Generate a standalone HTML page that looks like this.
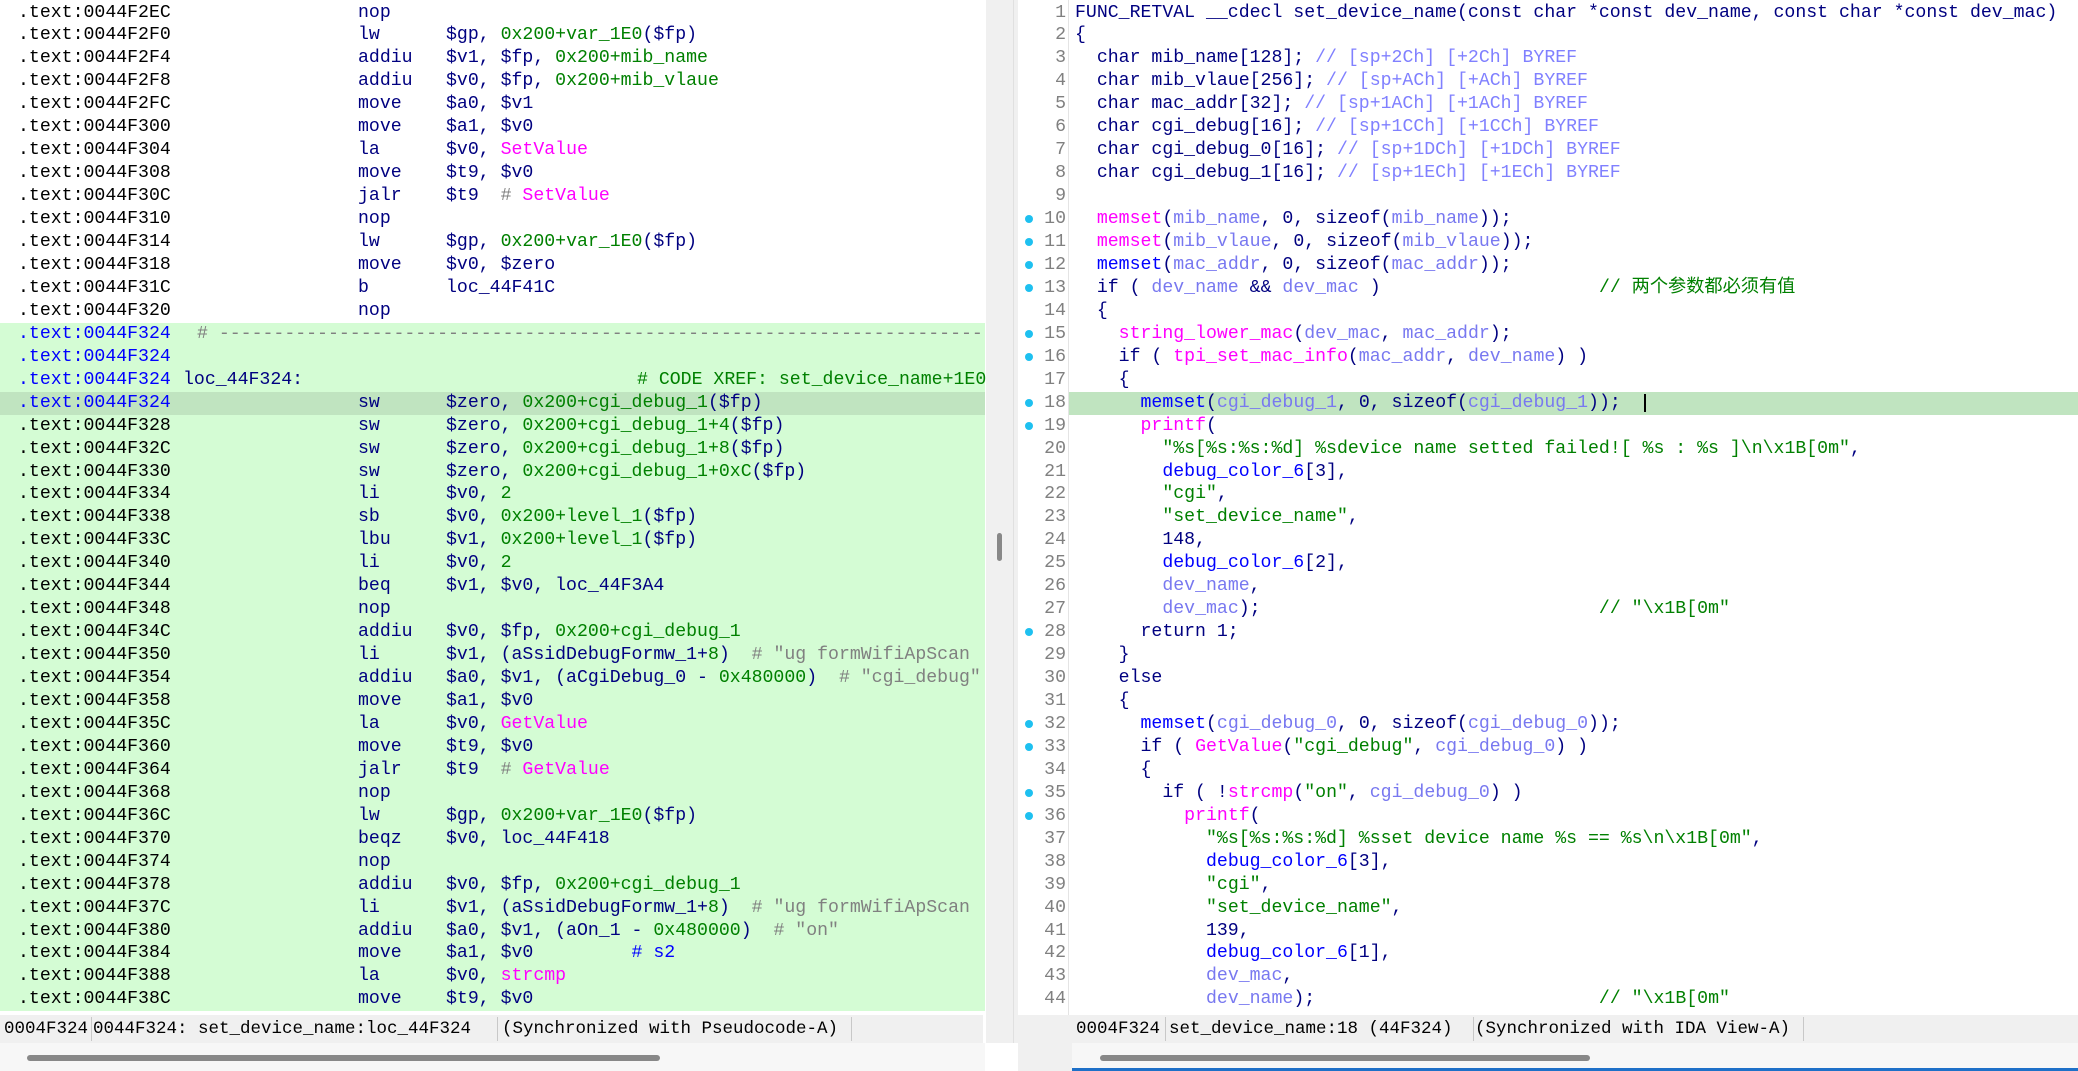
<!DOCTYPE html>
<html><head><meta charset="utf-8"><style>
*{margin:0;padding:0;box-sizing:border-box}
body{width:2078px;height:1071px;overflow:hidden;background:#fff;font-family:"Liberation Mono","Noto Sans CJK SC",monospace;font-size:18.2px;position:relative}
.row{position:absolute;left:0;height:22.95px;line-height:22.95px;white-space:pre}
.L{width:985px}
.L i{position:absolute;font-style:normal;top:0}
.a{left:18px;color:#000}
.m{left:358px;color:#000080}
.o{left:446px;color:#000080}
.bl{color:#0000ff}
.gr{background:#d4fcd4}
.hl{background:#c0e4c0}
.n{color:#000080}.v{color:#7878f0}.f{color:#ff00ff}.g{color:#0000ff}.s{color:#008000}.c{color:#8080ff}.k{color:#808080}
.R{left:1075px;width:1003px;color:#000080}
.ln{position:absolute;left:1012px;width:54px;text-align:right;color:#808080;height:22.95px;line-height:22.95px}
.dot{position:absolute;left:1025px;width:8px;height:8px;border-radius:50%;background:#1ec0f0}
.sb{position:absolute;top:1015px;height:28px;background:#f0f0f0;font-family:"Liberation Mono",monospace;font-size:17.5px;line-height:28px;color:#000;white-space:pre}
.sb span{position:absolute;top:0}
.sep{position:absolute;top:2px;width:1px;height:24px;background:#c8c8c8}
</style></head><body>
<div style="position:absolute;left:985px;top:0;width:33px;height:1043px;background:#f0f0f0;border-left:1px solid #fff"></div>
<div style="position:absolute;left:1013px;top:0;width:1px;height:1043px;background:#e0e0e0"></div>
<div style="position:absolute;left:997px;top:533px;width:5px;height:28px;border-radius:3px;background:#888"></div>
<div style="position:absolute;left:1068px;top:0;width:1px;height:1015px;background:#e4e4e4"></div>
<div style="position:absolute;left:0;top:322.8px;width:985px;height:688.5px;background:#d4fcd4"></div>

<!-- LEFT -->
<div class="row L" style="top:1.5px"><i class="a">.text:0044F2EC</i><i class="m">nop</i></div>
<div class="row L" style="top:24.45px"><i class="a">.text:0044F2F0</i><i class="m">lw</i><i class="o">$gp, <span class="s">0x200+var_1E0</span>($fp)</i></div>
<div class="row L" style="top:47.4px"><i class="a">.text:0044F2F4</i><i class="m">addiu</i><i class="o">$v1, $fp, <span class="s">0x200+mib_name</span></i></div>
<div class="row L" style="top:70.35px"><i class="a">.text:0044F2F8</i><i class="m">addiu</i><i class="o">$v0, $fp, <span class="s">0x200+mib_vlaue</span></i></div>
<div class="row L" style="top:93.3px"><i class="a">.text:0044F2FC</i><i class="m">move</i><i class="o">$a0, $v1</i></div>
<div class="row L" style="top:116.25px"><i class="a">.text:0044F300</i><i class="m">move</i><i class="o">$a1, $v0</i></div>
<div class="row L" style="top:139.2px"><i class="a">.text:0044F304</i><i class="m">la</i><i class="o">$v0, <span class="f">SetValue</span></i></div>
<div class="row L" style="top:162.15px"><i class="a">.text:0044F308</i><i class="m">move</i><i class="o">$t9, $v0</i></div>
<div class="row L" style="top:185.1px"><i class="a">.text:0044F30C</i><i class="m">jalr</i><i class="o">$t9  <span class="k">#</span> <span class="f">SetValue</span></i></div>
<div class="row L" style="top:208.05px"><i class="a">.text:0044F310</i><i class="m">nop</i></div>
<div class="row L" style="top:231px"><i class="a">.text:0044F314</i><i class="m">lw</i><i class="o">$gp, <span class="s">0x200+var_1E0</span>($fp)</i></div>
<div class="row L" style="top:253.95px"><i class="a">.text:0044F318</i><i class="m">move</i><i class="o">$v0, $zero</i></div>
<div class="row L" style="top:276.9px"><i class="a">.text:0044F31C</i><i class="m">b</i><i class="o">loc_44F41C</i></div>
<div class="row L" style="top:299.85px"><i class="a">.text:0044F320</i><i class="m">nop</i></div>
<div class="row L" style="top:322.8px;overflow:hidden"><i class="a bl">.text:0044F324</i><i class="k" style="left:197px">#&nbsp;----------------------------------------------------------------------</i></div>
<div class="row L" style="top:345.75px"><i class="a bl">.text:0044F324</i></div>
<div class="row L" style="top:368.7px"><i class="a bl">.text:0044F324</i><i class="n" style="left:183px">loc_44F324:</i><i class="s" style="left:637px">#&nbsp;CODE XREF: set_device_name+1E0</i></div>
<div class="row L hl" style="top:391.65px"><i class="a bl">.text:0044F324</i><i class="m">sw</i><i class="o">$zero, <span class="s">0x200+cgi_debug_1</span>($fp)</i></div>
<div class="row L" style="top:414.6px"><i class="a">.text:0044F328</i><i class="m">sw</i><i class="o">$zero, <span class="s">0x200+cgi_debug_1+4</span>($fp)</i></div>
<div class="row L" style="top:437.55px"><i class="a">.text:0044F32C</i><i class="m">sw</i><i class="o">$zero, <span class="s">0x200+cgi_debug_1+8</span>($fp)</i></div>
<div class="row L" style="top:460.5px"><i class="a">.text:0044F330</i><i class="m">sw</i><i class="o">$zero, <span class="s">0x200+cgi_debug_1+0xC</span>($fp)</i></div>
<div class="row L" style="top:483.45px"><i class="a">.text:0044F334</i><i class="m">li</i><i class="o">$v0, <span class="s">2</span></i></div>
<div class="row L" style="top:506.4px"><i class="a">.text:0044F338</i><i class="m">sb</i><i class="o">$v0, <span class="s">0x200+level_1</span>($fp)</i></div>
<div class="row L" style="top:529.35px"><i class="a">.text:0044F33C</i><i class="m">lbu</i><i class="o">$v1, <span class="s">0x200+level_1</span>($fp)</i></div>
<div class="row L" style="top:552.3px"><i class="a">.text:0044F340</i><i class="m">li</i><i class="o">$v0, <span class="s">2</span></i></div>
<div class="row L" style="top:575.25px"><i class="a">.text:0044F344</i><i class="m">beq</i><i class="o">$v1, $v0, loc_44F3A4</i></div>
<div class="row L" style="top:598.2px"><i class="a">.text:0044F348</i><i class="m">nop</i></div>
<div class="row L" style="top:621.15px"><i class="a">.text:0044F34C</i><i class="m">addiu</i><i class="o">$v0, $fp, <span class="s">0x200+cgi_debug_1</span></i></div>
<div class="row L" style="top:644.1px;overflow:hidden"><i class="a">.text:0044F350</i><i class="m">li</i><i class="o">$v1, (aSsidDebugFormw_1+<span class="s">8</span>)  <span class="k">#&nbsp;"ug formWifiApScan</span></i></div>
<div class="row L" style="top:667.05px;overflow:hidden"><i class="a">.text:0044F354</i><i class="m">addiu</i><i class="o">$a0, $v1, (aCgiDebug_0 - <span class="s">0x480000</span>)  <span class="k">#&nbsp;"cgi_debug"</span></i></div>
<div class="row L" style="top:690px"><i class="a">.text:0044F358</i><i class="m">move</i><i class="o">$a1, $v0</i></div>
<div class="row L" style="top:712.95px"><i class="a">.text:0044F35C</i><i class="m">la</i><i class="o">$v0, <span class="f">GetValue</span></i></div>
<div class="row L" style="top:735.9px"><i class="a">.text:0044F360</i><i class="m">move</i><i class="o">$t9, $v0</i></div>
<div class="row L" style="top:758.85px"><i class="a">.text:0044F364</i><i class="m">jalr</i><i class="o">$t9  <span class="k">#</span> <span class="f">GetValue</span></i></div>
<div class="row L" style="top:781.8px"><i class="a">.text:0044F368</i><i class="m">nop</i></div>
<div class="row L" style="top:804.75px"><i class="a">.text:0044F36C</i><i class="m">lw</i><i class="o">$gp, <span class="s">0x200+var_1E0</span>($fp)</i></div>
<div class="row L" style="top:827.7px"><i class="a">.text:0044F370</i><i class="m">beqz</i><i class="o">$v0, loc_44F418</i></div>
<div class="row L" style="top:850.65px"><i class="a">.text:0044F374</i><i class="m">nop</i></div>
<div class="row L" style="top:873.6px"><i class="a">.text:0044F378</i><i class="m">addiu</i><i class="o">$v0, $fp, <span class="s">0x200+cgi_debug_1</span></i></div>
<div class="row L" style="top:896.55px;overflow:hidden"><i class="a">.text:0044F37C</i><i class="m">li</i><i class="o">$v1, (aSsidDebugFormw_1+<span class="s">8</span>)  <span class="k">#&nbsp;"ug formWifiApScan</span></i></div>
<div class="row L" style="top:919.5px"><i class="a">.text:0044F380</i><i class="m">addiu</i><i class="o">$a0, $v1, (aOn_1 - <span class="s">0x480000</span>)  <span class="k">#&nbsp;"on"</span></i></div>
<div class="row L" style="top:942.45px"><i class="a">.text:0044F384</i><i class="m">move</i><i class="o">$a1, $v0         <span class="g">#&nbsp;s2</span></i></div>
<div class="row L" style="top:965.4px"><i class="a">.text:0044F388</i><i class="m">la</i><i class="o">$v0, <span class="f">strcmp</span></i></div>
<div class="row L" style="top:988.35px"><i class="a">.text:0044F38C</i><i class="m">move</i><i class="o">$t9, $v0</i></div>

<!-- RIGHT -->
<div class="row hl" style="top:391.65px;left:1069px;width:1009px"></div>
<div style="position:absolute;left:1644px;top:394px;width:2px;height:18px;background:#000"></div>
<div class="row R" style="top:1.5px">FUNC_RETVAL __cdecl set_device_name(const char *const dev_name, const char *const dev_mac)</div>
<div class="row R" style="top:24.45px">{</div>
<div class="row R" style="top:47.4px">  char mib_name[128]; <span class="c">// [sp+2Ch] [+2Ch] BYREF</span></div>
<div class="row R" style="top:70.35px">  char mib_vlaue[256]; <span class="c">// [sp+ACh] [+ACh] BYREF</span></div>
<div class="row R" style="top:93.3px">  char mac_addr[32]; <span class="c">// [sp+1ACh] [+1ACh] BYREF</span></div>
<div class="row R" style="top:116.25px">  char cgi_debug[16]; <span class="c">// [sp+1CCh] [+1CCh] BYREF</span></div>
<div class="row R" style="top:139.2px">  char cgi_debug_0[16]; <span class="c">// [sp+1DCh] [+1DCh] BYREF</span></div>
<div class="row R" style="top:162.15px">  char cgi_debug_1[16]; <span class="c">// [sp+1ECh] [+1ECh] BYREF</span></div>
<div class="row R" style="top:208.05px">  <span class="f">memset</span>(<span class="v">mib_name</span>, 0, sizeof(<span class="v">mib_name</span>));</div>
<div class="row R" style="top:231px">  <span class="f">memset</span>(<span class="v">mib_vlaue</span>, 0, sizeof(<span class="v">mib_vlaue</span>));</div>
<div class="row R" style="top:253.95px">  <span class="g">memset</span>(<span class="v">mac_addr</span>, 0, sizeof(<span class="v">mac_addr</span>));</div>
<div class="row R" style="top:276.9px">  if ( <span class="v">dev_name</span> &amp;&amp; <span class="v">dev_mac</span> )                    <span class="s">// 两个参数都必须有值</span></div>
<div class="row R" style="top:299.85px">  {</div>
<div class="row R" style="top:322.8px">    <span class="f">string_lower_mac</span>(<span class="v">dev_mac</span>, <span class="v">mac_addr</span>);</div>
<div class="row R" style="top:345.75px">    if ( <span class="f">tpi_set_mac_info</span>(<span class="v">mac_addr</span>, <span class="v">dev_name</span>) )</div>
<div class="row R" style="top:368.7px">    {</div>
<div class="row R" style="top:391.65px">      <span class="g">memset</span>(<span class="v">cgi_debug_1</span>, 0, sizeof(<span class="v">cgi_debug_1</span>));</div>
<div class="row R" style="top:414.6px">      <span class="f">printf</span>(</div>
<div class="row R" style="top:437.55px">        <span class="s">"%s[%s:%s:%d] %sdevice name setted failed![ %s : %s ]\n\x1B[0m"</span>,</div>
<div class="row R" style="top:460.5px">        <span class="g">debug_color_6</span>[3],</div>
<div class="row R" style="top:483.45px">        <span class="s">"cgi"</span>,</div>
<div class="row R" style="top:506.4px">        <span class="s">"set_device_name"</span>,</div>
<div class="row R" style="top:529.35px">        148,</div>
<div class="row R" style="top:552.3px">        <span class="g">debug_color_6</span>[2],</div>
<div class="row R" style="top:575.25px">        <span class="v">dev_name</span>,</div>
<div class="row R" style="top:598.2px">        <span class="v">dev_mac</span>);                               <span class="s">// "\x1B[0m"</span></div>
<div class="row R" style="top:621.15px">      return 1;</div>
<div class="row R" style="top:644.1px">    }</div>
<div class="row R" style="top:667.05px">    else</div>
<div class="row R" style="top:690px">    {</div>
<div class="row R" style="top:712.95px">      <span class="g">memset</span>(<span class="v">cgi_debug_0</span>, 0, sizeof(<span class="v">cgi_debug_0</span>));</div>
<div class="row R" style="top:735.9px">      if ( <span class="f">GetValue</span>(<span class="s">"cgi_debug"</span>, <span class="v">cgi_debug_0</span>) )</div>
<div class="row R" style="top:758.85px">      {</div>
<div class="row R" style="top:781.8px">        if ( !<span class="f">strcmp</span>(<span class="s">"on"</span>, <span class="v">cgi_debug_0</span>) )</div>
<div class="row R" style="top:804.75px">          <span class="f">printf</span>(</div>
<div class="row R" style="top:827.7px">            <span class="s">"%s[%s:%s:%d] %sset device name %s == %s\n\x1B[0m"</span>,</div>
<div class="row R" style="top:850.65px">            <span class="g">debug_color_6</span>[3],</div>
<div class="row R" style="top:873.6px">            <span class="s">"cgi"</span>,</div>
<div class="row R" style="top:896.55px">            <span class="s">"set_device_name"</span>,</div>
<div class="row R" style="top:919.5px">            139,</div>
<div class="row R" style="top:942.45px">            <span class="g">debug_color_6</span>[1],</div>
<div class="row R" style="top:965.4px">            <span class="v">dev_mac</span>,</div>
<div class="row R" style="top:988.35px">            <span class="v">dev_name</span>);                          <span class="s">// "\x1B[0m"</span></div>

<div class="ln" style="top:1.5px">1</div><div class="ln" style="top:24.45px">2</div><div class="ln" style="top:47.4px">3</div><div class="ln" style="top:70.35px">4</div><div class="ln" style="top:93.3px">5</div><div class="ln" style="top:116.25px">6</div><div class="ln" style="top:139.2px">7</div><div class="ln" style="top:162.15px">8</div><div class="ln" style="top:185.1px">9</div><div class="ln" style="top:208.05px">10</div><div class="ln" style="top:231px">11</div><div class="ln" style="top:253.95px">12</div><div class="ln" style="top:276.9px">13</div><div class="ln" style="top:299.85px">14</div><div class="ln" style="top:322.8px">15</div><div class="ln" style="top:345.75px">16</div><div class="ln" style="top:368.7px">17</div><div class="ln" style="top:391.65px">18</div><div class="ln" style="top:414.6px">19</div><div class="ln" style="top:437.55px">20</div><div class="ln" style="top:460.5px">21</div><div class="ln" style="top:483.45px">22</div><div class="ln" style="top:506.4px">23</div><div class="ln" style="top:529.35px">24</div><div class="ln" style="top:552.3px">25</div><div class="ln" style="top:575.25px">26</div><div class="ln" style="top:598.2px">27</div><div class="ln" style="top:621.15px">28</div><div class="ln" style="top:644.1px">29</div><div class="ln" style="top:667.05px">30</div><div class="ln" style="top:690px">31</div><div class="ln" style="top:712.95px">32</div><div class="ln" style="top:735.9px">33</div><div class="ln" style="top:758.85px">34</div><div class="ln" style="top:781.8px">35</div><div class="ln" style="top:804.75px">36</div><div class="ln" style="top:827.7px">37</div><div class="ln" style="top:850.65px">38</div><div class="ln" style="top:873.6px">39</div><div class="ln" style="top:896.55px">40</div><div class="ln" style="top:919.5px">41</div><div class="ln" style="top:942.45px">42</div><div class="ln" style="top:965.4px">43</div><div class="ln" style="top:988.35px">44</div>

<div class="dot" style="top:215px"></div><div class="dot" style="top:238px"></div><div class="dot" style="top:261px"></div><div class="dot" style="top:284px"></div><div class="dot" style="top:330px"></div><div class="dot" style="top:353px"></div><div class="dot" style="top:399px"></div><div class="dot" style="top:422px"></div><div class="dot" style="top:628px"></div><div class="dot" style="top:720px"></div><div class="dot" style="top:743px"></div><div class="dot" style="top:789px"></div><div class="dot" style="top:812px"></div>

<!-- status bars -->
<div class="sb" style="left:0;width:983px">
<span style="left:4px">0004F324</span><div class="sep" style="left:91px"></div>
<span style="left:93px">0044F324: set_device_name:loc_44F324</span><div class="sep" style="left:497px"></div>
<span style="left:502px">(Synchronized with Pseudocode-A)</span><div class="sep" style="left:851px"></div>
</div>
<div style="position:absolute;left:0;top:1043px;width:985px;height:28px;background:#f7f7f7"></div>
<div style="position:absolute;left:27px;top:1055px;width:633px;height:6px;border-radius:3px;background:#888"></div>

<div class="sb" style="left:1072px;width:1006px">
<span style="left:4px">0004F324</span><div class="sep" style="left:93px"></div>
<span style="left:97px">set_device_name:18 (44F324)</span><div class="sep" style="left:401px"></div>
<span style="left:403px">(Synchronized with IDA View-A)</span><div class="sep" style="left:731px"></div>
</div>
<div style="position:absolute;left:1018px;top:1015px;width:54px;height:56px;background:#f0f0f0"></div>
<div style="position:absolute;left:1072px;top:1043px;width:1006px;height:25px;background:#f7f7f7"></div>
<div style="position:absolute;left:1100px;top:1055px;width:490px;height:6px;border-radius:3px;background:#888"></div>
<div style="position:absolute;left:1072px;top:1068px;width:1006px;height:3px;background:#1e70c8"></div>
</body></html>
